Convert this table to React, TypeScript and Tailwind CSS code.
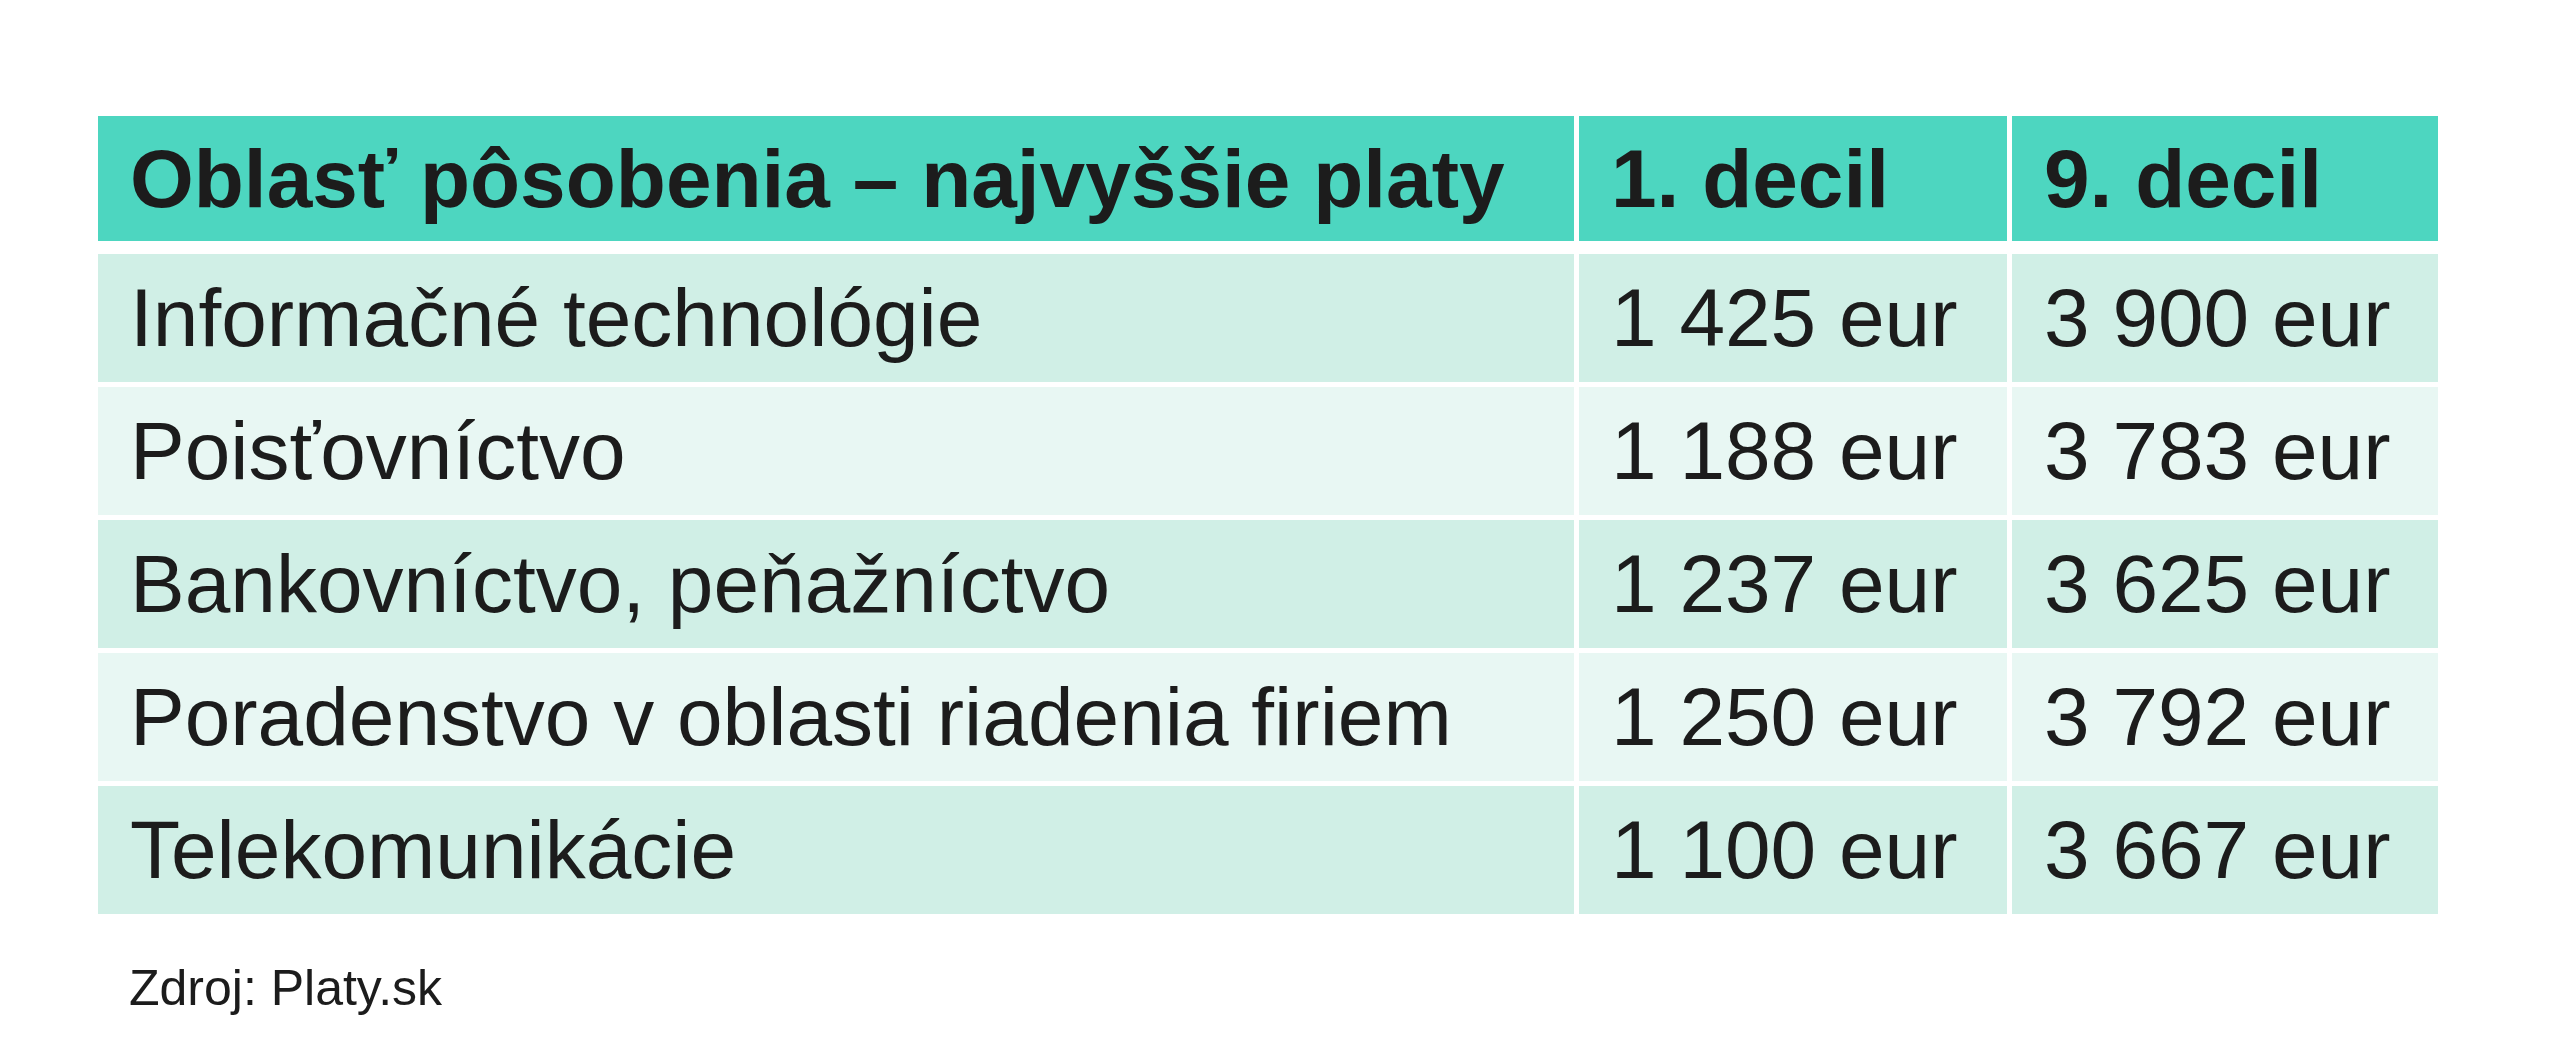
const rows = [
  { area: 'Informačné technológie', d1: '1 425 eur', d9: '3 900 eur' },
  { area: 'Poisťovníctvo', d1: '1 188 eur', d9: '3 783 eur' },
  { area: 'Bankovníctvo, peňažníctvo', d1: '1 237 eur', d9: '3 625 eur' },
  { area: 'Poradenstvo v oblasti riadenia firiem', d1: '1 250 eur', d9: '3 792 eur' },
  { area: 'Telekomunikácie', d1: '1 100 eur', d9: '3 667 eur' },
]

const cols = 'grid grid-cols-[1476px_428px_426px] gap-x-[5px]'

export default function App() {
  return (
    <div className="min-h-[1056px] w-full bg-white pt-[116px] pl-[98px] text-[#1c1c1c] font-['Liberation_Sans',Arial,sans-serif]">
      <div className={cols + ' mb-[13px]'}>
        {['Oblasť pôsobenia – najvyššie platy', '1. decil', '9. decil'].map((h) => (
          <div key={h} className="flex h-[125px] items-center bg-[#4dd6c0] pl-[32px] text-[82px] font-bold leading-none">
            {h}
          </div>
        ))}
      </div>
      <div className="flex flex-col gap-y-[5px]">
        {rows.map((r, i) => (
          <div key={r.area} className={cols}>
            {[r.area, r.d1, r.d9].map((c, j) => (
              <div
                key={j}
                className={
                  'flex h-[128px] items-center pl-[32px] text-[82px] leading-none ' +
                  (i % 2 === 0 ? 'bg-[#d0efe6]' : 'bg-[#e8f7f3]')
                }
              >
                {c}
              </div>
            ))}
          </div>
        ))}
      </div>
      <p className="mt-[49px] pl-[31px] text-[50px] leading-none">Zdroj: Platy.sk</p>
    </div>
  )
}
